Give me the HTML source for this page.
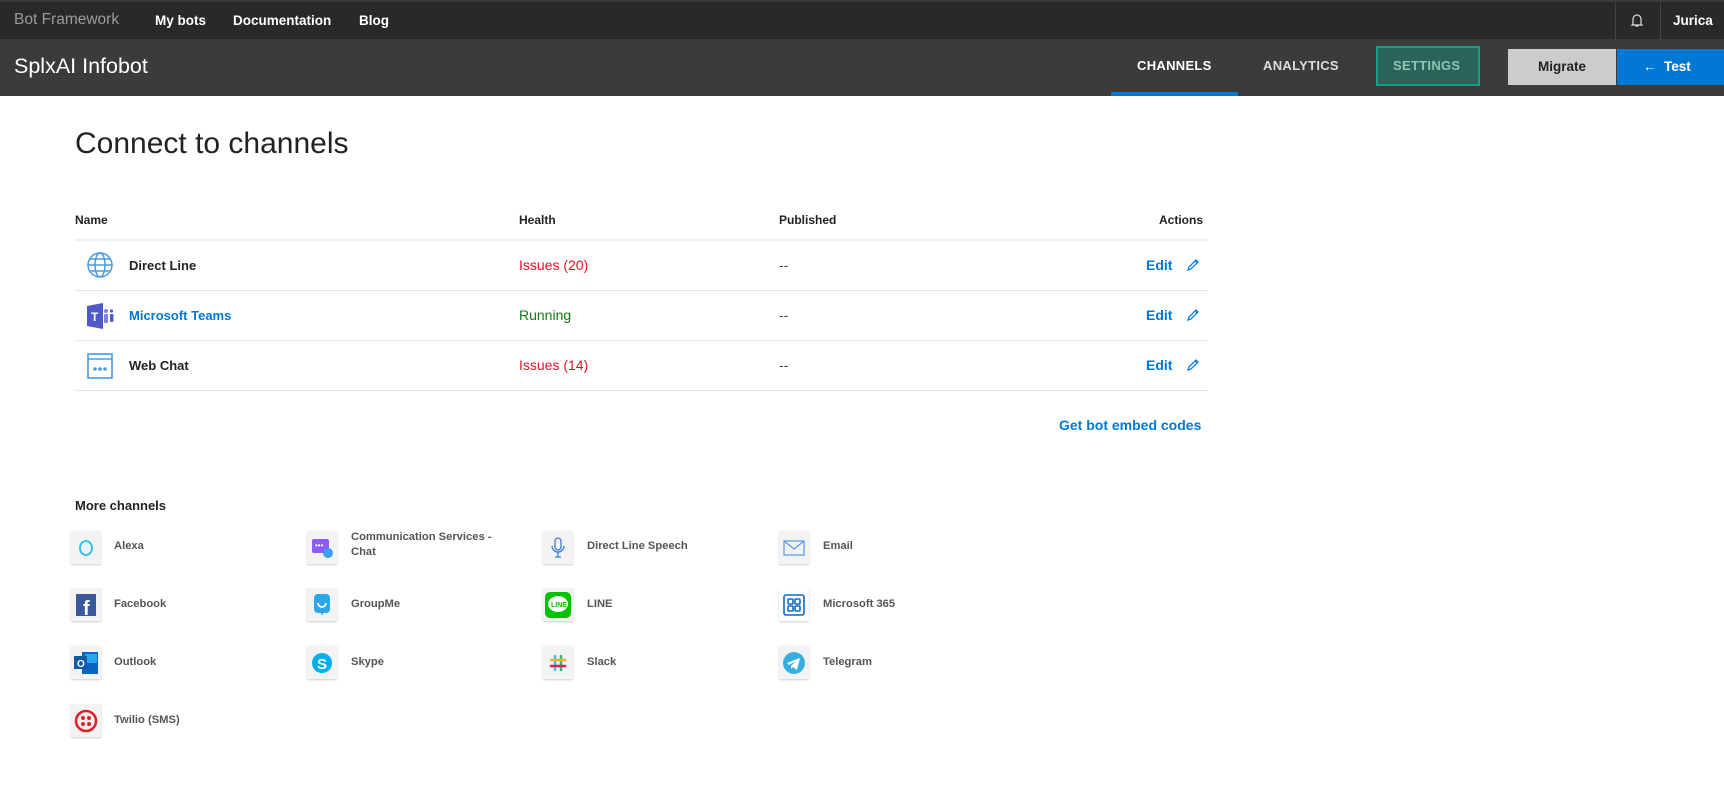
<!DOCTYPE html>
<html><head><meta charset="utf-8"><style>
*{margin:0;padding:0;box-sizing:border-box}
body{width:1724px;height:794px;overflow:hidden;background:#fff;font-family:"Liberation Sans",sans-serif;position:relative;color:#222}
.a{position:absolute;white-space:nowrap}
.top{left:0;top:0;width:1724px;height:39px;background:#292929;border-top:2px solid #3a3a3a}
.sub{left:0;top:39px;width:1724px;height:57px;background:#3b3b3b}
.nav{color:#fff;font-size:13.5px;font-weight:bold;top:13px}
.tab{font-size:13px;font-weight:bold;top:58px;letter-spacing:.3px}
.th{font-size:12px;font-weight:bold;top:213px;color:#222}
.line{left:75px;width:1133px;height:1px;background:#e3e3e3}
.nm{font-size:13px;font-weight:bold;left:129px}
.hl{font-size:14px;left:519px}
.pub{font-size:14px;left:779px;color:#444}
.ed{font-size:14px;font-weight:bold;color:#0078d4;left:1146px}
.tile{width:30px;height:33px;background:#f3f3f3;box-shadow:0 1px 2px rgba(0,0,0,.2);display:flex;align-items:center;justify-content:center}
.lb{font-size:11.2px;font-weight:bold;color:#555}
</style></head><body>
<div class="a top"></div>
<div class="a nav" style="left:14px;color:#9a9a9a;font-weight:normal;font-size:15.5px;top:11px">Bot Framework</div>
<div class="a nav" style="left:155px">My bots</div>
<div class="a nav" style="left:233px">Documentation</div>
<div class="a nav" style="left:359px">Blog</div>
<div class="a" style="left:1615px;top:2px;width:1px;height:37px;background:#444"></div>
<svg class="a" style="left:1630px;top:13px" width="14" height="15" viewBox="0 0 14 15"><path d="M3 11V6a4 4 0 0 1 8 0v5l1 1H2z M5.5 13h3" fill="none" stroke="#ddd" stroke-width="1.2"/></svg>
<div class="a" style="left:1660px;top:2px;width:1px;height:37px;background:#444"></div>
<div class="a nav" style="left:1673px">Jurica</div>
<div class="a sub"></div>
<div class="a" style="left:14px;top:54px;color:#fff;font-size:21.5px">SplxAI Infobot</div>
<div class="a tab" style="left:1137px;color:#fff">CHANNELS</div>
<div class="a" style="left:1111px;top:92px;width:127px;height:4px;background:#0078d4"></div>
<div class="a tab" style="left:1263px;color:#ddd">ANALYTICS</div>
<div class="a" style="left:1376px;top:46px;width:104px;height:40px;border:2px solid #12a08a;background:#2a6358"></div>
<div class="a tab" style="left:1393px;color:#8fc4b8">SETTINGS</div>
<div class="a" style="left:1508px;top:49px;width:108px;height:36px;background:#cccccc;color:#222;font-size:13.5px;font-weight:bold;text-align:center;line-height:36px">Migrate</div>
<div class="a" style="left:1617px;top:49px;width:107px;height:36px;background:#0078d4;color:#fff;font-size:13.5px;font-weight:bold;line-height:36px;padding-left:26px">&#8592;&nbsp; Test</div>

<div class="a" style="left:75px;top:127px;font-size:30px;color:#222">Connect to channels</div>
<div class="a th" style="left:75px">Name</div>
<div class="a th" style="left:519px">Health</div>
<div class="a th" style="left:779px">Published</div>
<div class="a th" style="left:1159px">Actions</div>
<div class="a line" style="top:239px;height:2px;background:#eee"></div>
<div class="a line" style="top:290px"></div>
<div class="a line" style="top:340px"></div>
<div class="a line" style="top:390px"></div>

<svg class="a" style="left:87px;top:252px" width="26" height="26" viewBox="0 0 26 26" fill="none" stroke="#4a9be0" stroke-width="1.5"><circle cx="13" cy="13" r="12"/><ellipse cx="13" cy="13" rx="5" ry="12"/><path d="M1 13h24M3 7h20M3 19h20"/></svg>
<div class="a nm" style="top:258px">Direct Line</div>
<div class="a hl" style="top:257px;color:#e81123">Issues (20)</div>
<div class="a pub" style="top:257px">--</div>
<div class="a ed" style="top:257px">Edit</div>
<svg class="a" style="left:1186px;top:258px" width="14" height="14" viewBox="0 0 14 14" fill="none" stroke="#0078d4" stroke-width="1.2"><path d="M2 12l1-3 7-7 2 2-7 7z M9 3l2 2"/></svg>

<svg class="a" style="left:87px;top:303px" width="27" height="26" viewBox="0 0 27 26"><path d="M0 3l16-3v26L0 23z" fill="#5059c9"/><text x="4" y="18" fill="#fff" font-size="12" font-weight="bold" font-family="Liberation Sans">T</text><circle cx="19" cy="8" r="2" fill="#7b83eb"/><rect x="17" y="11" width="4" height="9" rx="1" fill="#7b83eb"/><circle cx="24.5" cy="8" r="1.6" fill="#5059c9"/><rect x="23" y="11" width="3.5" height="8" rx="1" fill="#5059c9"/></svg>
<div class="a nm" style="top:308px;color:#0078d4">Microsoft Teams</div>
<div class="a hl" style="top:307px;color:#107c10">Running</div>
<div class="a pub" style="top:307px">--</div>
<div class="a ed" style="top:307px">Edit</div>
<svg class="a" style="left:1186px;top:308px" width="14" height="14" viewBox="0 0 14 14" fill="none" stroke="#0078d4" stroke-width="1.2"><path d="M2 12l1-3 7-7 2 2-7 7z M9 3l2 2"/></svg>

<svg class="a" style="left:87px;top:353px" width="26" height="26" viewBox="0 0 26 26" fill="none" stroke="#4a9be0" stroke-width="1.6"><rect x="1" y="1" width="24" height="24"/><path d="M1 6h24"/><circle cx="8" cy="16" r="1" fill="#4a9be0"/><circle cx="13" cy="16" r="1" fill="#4a9be0"/><circle cx="18" cy="16" r="1" fill="#4a9be0"/></svg>
<div class="a nm" style="top:358px">Web Chat</div>
<div class="a hl" style="top:357px;color:#e81123">Issues (14)</div>
<div class="a pub" style="top:357px">--</div>
<div class="a ed" style="top:357px">Edit</div>
<svg class="a" style="left:1186px;top:358px" width="14" height="14" viewBox="0 0 14 14" fill="none" stroke="#0078d4" stroke-width="1.2"><path d="M2 12l1-3 7-7 2 2-7 7z M9 3l2 2"/></svg>

<div class="a" style="left:1059px;top:417px;font-size:14px;font-weight:bold;color:#0078d4">Get bot embed codes</div>
<div class="a" style="left:75px;top:498px;font-size:13px;font-weight:bold">More channels</div>

<div class="a tile" style="left:71px;top:531px"><svg width="16" height="18"><ellipse cx="8" cy="9" rx="6" ry="7" fill="none" stroke="#31c4f3" stroke-width="2"/></svg></div>
<div class="a lb" style="left:114px;top:540px">Alexa</div>
<div class="a tile" style="left:307px;top:531px"><svg width="22" height="22"><rect x="1" y="2" width="17" height="14" rx="2" fill="#8b5cf6"/><text x="4" y="11" fill="#fff" font-size="8">•••</text><circle cx="17" cy="16" r="5" fill="#3aa0f0"/></svg></div>
<div class="a lb" style="left:351px;top:530px;line-height:15px">Communication Services -<br>Chat</div>
<div class="a tile" style="left:543px;top:531px"><svg width="14" height="22" fill="none" stroke="#3b7fd8" stroke-width="1.3"><rect x="4" y="1" width="6" height="12" rx="3"/><path d="M1 9a6 6 0 0 0 12 0M7 15v5M4 20h6"/></svg></div>
<div class="a lb" style="left:587px;top:540px">Direct Line Speech</div>
<div class="a tile" style="left:779px;top:531px"><svg width="22" height="16" fill="none" stroke="#5aa0e8" stroke-width="1.3"><rect x="1" y="1" width="20" height="14"/><path d="M1 1l10 8 10-8"/></svg></div>
<div class="a lb" style="left:823px;top:540px">Email</div>

<div class="a tile" style="left:71px;top:588px"><svg width="20" height="22"><rect width="20" height="22" fill="#3b5998"/><text x="7" y="21" fill="#fff" font-size="20" font-weight="bold" font-family="Liberation Sans">f</text></svg></div>
<div class="a lb" style="left:114px;top:598px">Facebook</div>
<div class="a tile" style="left:307px;top:588px"><svg width="18" height="24"><rect x="1" y="1" width="16" height="19" rx="4" fill="#29a9eb"/><path d="M5 10a4 4 0 0 0 8 0" stroke="#fff" stroke-width="1.8" fill="none"/><path d="M8 20l1 3 1-3z" fill="#29a9eb"/></svg></div>
<div class="a lb" style="left:351px;top:598px">GroupMe</div>
<div class="a tile" style="left:543px;top:588px"><svg width="26" height="26"><rect width="26" height="26" rx="5" fill="#00c300"/><ellipse cx="13" cy="12" rx="10" ry="8" fill="#fff"/><text x="6" y="15" fill="#00c300" font-size="7" font-weight="bold" font-family="Liberation Sans">LINE</text></svg></div>
<div class="a lb" style="left:587px;top:598px">LINE</div>
<div class="a tile" style="left:779px;top:588px;background:#fff"><svg width="22" height="22" fill="none" stroke="#0f6cbd" stroke-width="1.6"><rect x="1" y="1" width="20" height="20" rx="2"/><rect x="5" y="5" width="5" height="5" rx="1"/><rect x="12" y="5" width="5" height="5" rx="1"/><rect x="5" y="12" width="5" height="5" rx="1"/><rect x="12" y="12" width="5" height="5" rx="1"/></svg></div>
<div class="a lb" style="left:823px;top:598px">Microsoft 365</div>

<div class="a tile" style="left:71px;top:646px"><svg width="26" height="24"><rect x="9" y="1" width="16" height="22" fill="#0a64c8"/><rect x="12" y="3" width="12" height="9" fill="#28a8ea"/><rect x="1" y="5" width="13" height="13" fill="#0f5aa8"/><text x="4" y="16" fill="#fff" font-size="10" font-weight="bold" font-family="Liberation Sans">O</text></svg></div>
<div class="a lb" style="left:114px;top:656px">Outlook</div>
<div class="a tile" style="left:307px;top:646px"><svg width="22" height="22"><circle cx="11" cy="11" r="10" fill="#00aff0"/><text x="6" y="17" fill="#fff" font-size="15" font-weight="bold" font-family="Liberation Sans">S</text></svg></div>
<div class="a lb" style="left:351px;top:656px">Skype</div>
<div class="a tile" style="left:543px;top:646px"><svg width="20" height="20" stroke-width="2.5" stroke-linecap="round"><path d="M7 3v14" stroke="#36c5f0"/><path d="M13 3v14" stroke="#2eb67d"/><path d="M3 7h14" stroke="#ecb22e"/><path d="M3 13h14" stroke="#e01e5a"/></svg></div>
<div class="a lb" style="left:587px;top:656px">Slack</div>
<div class="a tile" style="left:779px;top:646px"><svg width="24" height="24"><circle cx="12" cy="12" r="11" fill="#37aee2"/><path d="M5 12l13-5-3 12-4-3-2 2v-3l5-5-7 4z" fill="#fff"/></svg></div>
<div class="a lb" style="left:823px;top:656px">Telegram</div>

<div class="a tile" style="left:71px;top:704px"><svg width="24" height="24"><circle cx="12" cy="12" r="10" fill="none" stroke="#e31e26" stroke-width="2.5"/><circle cx="9" cy="9" r="2" fill="#e31e26"/><circle cx="15" cy="9" r="2" fill="#e31e26"/><circle cx="9" cy="15" r="2" fill="#e31e26"/><circle cx="15" cy="15" r="2" fill="#e31e26"/></svg></div>
<div class="a lb" style="left:114px;top:714px">Twilio (SMS)</div>
</body></html>
